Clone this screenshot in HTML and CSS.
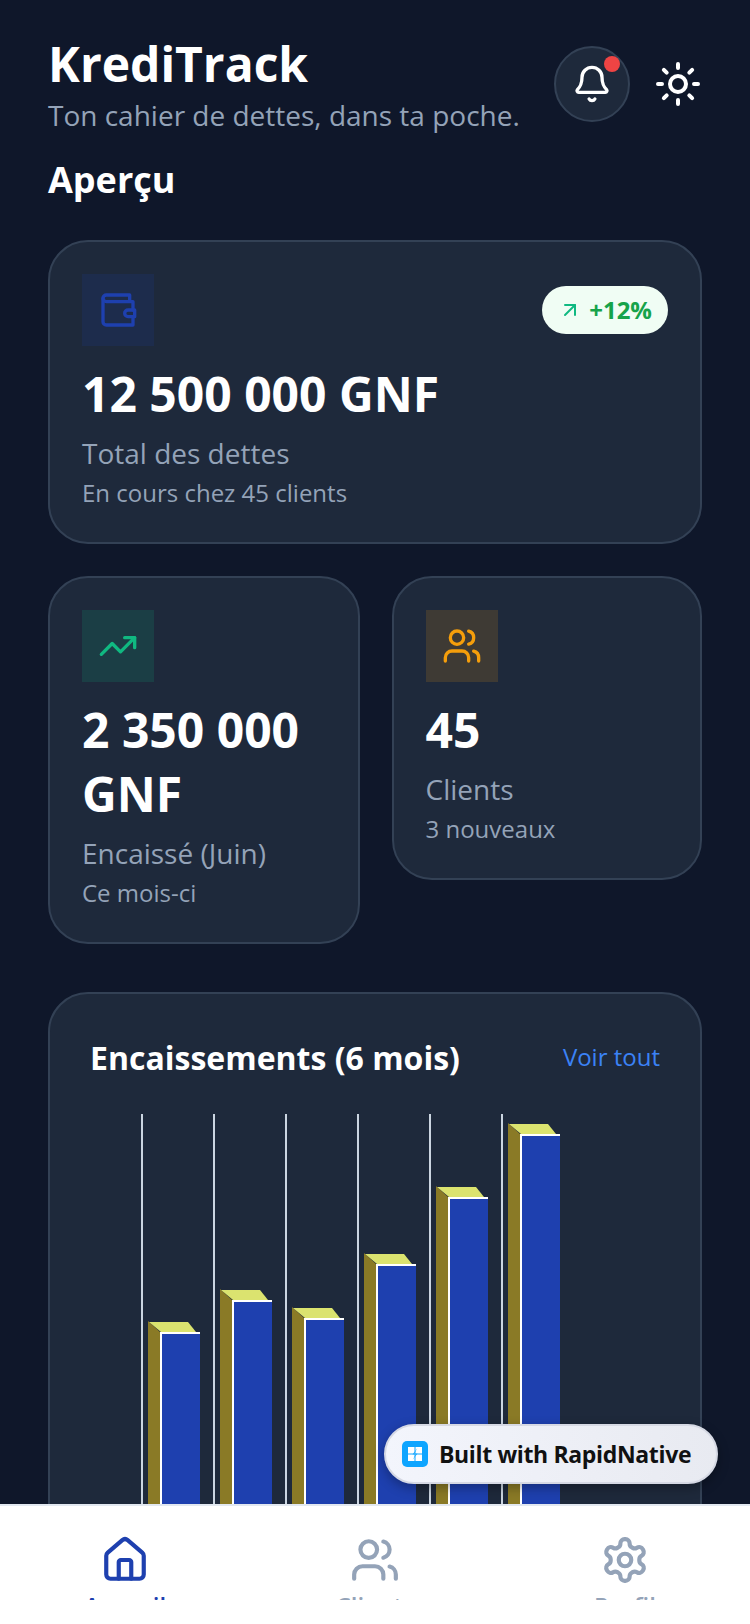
FILE: index.html
```html
<!DOCTYPE html>
<html lang="fr">
    <head>
        <meta charset="UTF-8" />
        <meta name="viewport" content="width=device-width, initial-scale=1.0" />
        <title>KrediTrack</title>
        <link rel="stylesheet" href="styles.css">
    </head>
    <body>
        <div class="app">
            <main class="scroll">
                <header class="header">
                    <div>
                        <h1 class="brand">KrediTrack</h1>
                        <p class="tagline">Ton cahier de dettes, dans ta poche.</p>
                    </div>
                    <div class="header-actions">
                        <button class="bell">
                            <svg class="icon" width="40" height="40" viewBox="0 0 24 24">
                                <path d="M10.268 21a2 2 0 0 0 3.464 0" />
                                <path d="M3.262 15.326A1 1 0 0 0 4 17h16a1 1 0 0 0 .74-1.673C19.41 13.956 18 12.499 18 8A6 6 0 0 0 6 8c0 4.499-1.411 5.956-2.738 7.326" />
                            </svg>
                            <span class="bell-dot"></span>
                        </button>
                        <svg class="icon" width="48" height="48" viewBox="0 0 24 24">
                            <circle cx="12" cy="12" r="4" />
                            <path d="M12 2v2M12 20v2M4.93 4.93l1.41 1.41M17.66 17.66l1.41 1.41M2 12h2M20 12h2M6.34 17.66l-1.41 1.41M19.07 4.93l-1.41 1.41" />
                        </svg>
                    </div>
                </header>

                <h2 class="section-title">Aperçu</h2>

                <section class="card">
                    <div class="card-top">
                        <div class="icon-box icon-box-blue">
                            <svg class="icon" width="40" height="40" viewBox="0 0 24 24">
                                <path d="M21 12V7H5a2 2 0 0 1 0-4h14v4" />
                                <path d="M3 5v14a2 2 0 0 0 2 2h16v-5" />
                                <path d="M18 12a2 2 0 0 0 0 4h4v-4Z" />
                            </svg>
                        </div>
                        <div class="trend">
                            <svg class="icon" width="24" height="24" viewBox="0 0 24 24">
                                <path d="M7 7h10v10" />
                                <path d="M7 17 17 7" />
                            </svg>
                            <span>+12%</span>
                        </div>
                    </div>
                    <div class="value">12 500 000 GNF</div>
                    <div class="label">Total des dettes</div>
                    <div class="sub">En cours chez 45 clients</div>
                </section>

                <div class="card-row">
                    <section class="card">
                        <div class="icon-box icon-box-green">
                            <svg class="icon" width="40" height="40" viewBox="0 0 24 24">
                                <path d="M22 7 13.5 15.5 8.5 10.5 2 17" />
                                <path d="M16 7h6v6" />
                            </svg>
                        </div>
                        <div class="value">2 350 000 GNF</div>
                        <div class="label">Encaissé (Juin)</div>
                        <div class="sub">Ce mois-ci</div>
                    </section>
                    <section class="card">
                        <div class="icon-box icon-box-amber">
                            <svg class="icon" width="40" height="40" viewBox="0 0 24 24">
                                <path d="M16 21v-2a4 4 0 0 0-4-4H6a4 4 0 0 0-4 4v2" />
                                <circle cx="9" cy="7" r="4" />
                                <path d="M22 21v-2a4 4 0 0 0-3-3.87" />
                                <path d="M16 3.13a4 4 0 0 1 0 7.75" />
                            </svg>
                        </div>
                        <div class="value">45</div>
                        <div class="label">Clients</div>
                        <div class="sub">3 nouveaux</div>
                    </section>
                </div>

                <section class="card chart-card">
                    <div class="chart-head">
                        <h3 class="chart-title">Encaissements (6 mois)</h3>
                        <span class="chart-link">Voir tout</span>
                    </div>
                    <!-- x = 52 in here is x = 142 on the page, y = 0 is y = 1114 -->
                    <svg class="chart" width="570" height="460" viewBox="0 0 570 460">
                        <defs>
                            <g id="bar">
                                <polygon class="bar-side" points="0,-11 12,0 12,460 0,460" />
                                <polygon class="bar-top" points="1,-10 40,-10 48,0 13,0" />
                                <rect class="bar-edge" x="12" y="0" width="40" height="460" />
                                <rect class="bar-face" x="14" y="2" width="38" height="460" />
                            </g>
                        </defs>
                        <path class="grid" d="M52 0V460M124 0V460M196 0V460M268 0V460M340 0V460M412 0V460" />
                        <use href="#bar" x="58" y="218" />
                        <use href="#bar" x="130" y="186" />
                        <use href="#bar" x="202" y="204" />
                        <use href="#bar" x="274" y="150" />
                        <use href="#bar" x="346" y="83" />
                        <use href="#bar" x="418" y="20" />
                    </svg>
                </section>
            </main>

            <div class="built">
                <svg width="26" height="26" viewBox="0 0 26 26">
                    <rect width="26" height="26" rx="5" fill="#0ea5ff" />
                    <rect x="6" y="6" width="6.5" height="6.5" fill="#fff" />
                    <rect x="13.5" y="6" width="6.5" height="6.5" fill="#fff" />
                    <rect x="6" y="13.5" width="6.5" height="6.5" fill="#fff" />
                    <rect x="13.5" y="13.5" width="6.5" height="6.5" fill="#fff" />
                    <polygon points="15.5,7 10.5,13.5 14,13 10.5,19 15.5,12.5 12,13" fill="#0ea5ff" />
                </svg>
                <span>Built with RapidNative</span>
            </div>

            <nav class="tabs">
                <div class="tab tab-active">
                    <svg class="icon" width="50" height="50" viewBox="0 0 24 24">
                        <path d="M15 21v-8a1 1 0 0 0-1-1h-4a1 1 0 0 0-1 1v8" />
                        <path d="M3 10a2 2 0 0 1 .709-1.528l7-5.999a2 2 0 0 1 2.582 0l7 5.999A2 2 0 0 1 21 10v9a2 2 0 0 1-2 2H5a2 2 0 0 1-2-2z" />
                    </svg>
                    <span>Accueil</span>
                </div>
                <div class="tab">
                    <svg class="icon" width="50" height="50" viewBox="0 0 24 24">
                        <path d="M16 21v-2a4 4 0 0 0-4-4H6a4 4 0 0 0-4 4v2" />
                        <circle cx="9" cy="7" r="4" />
                        <path d="M22 21v-2a4 4 0 0 0-3-3.87" />
                        <path d="M16 3.13a4 4 0 0 1 0 7.75" />
                    </svg>
                    <span>Clients</span>
                </div>
                <div class="tab">
                    <svg class="icon" width="50" height="50" viewBox="0 0 24 24">
                        <path d="M12.22 2h-.44a2 2 0 0 0-2 2v.18a2 2 0 0 1-1 1.73l-.43.25a2 2 0 0 1-2 0l-.15-.08a2 2 0 0 0-2.73.73l-.22.38a2 2 0 0 0 .73 2.73l.15.1a2 2 0 0 1 1 1.72v.51a2 2 0 0 1-1 1.74l-.15.09a2 2 0 0 0-.73 2.73l.22.38a2 2 0 0 0 2.73.73l.15-.08a2 2 0 0 1 2 0l.43.25a2 2 0 0 1 1 1.73V20a2 2 0 0 0 2 2h.44a2 2 0 0 0 2-2v-.18a2 2 0 0 1 1-1.73l.43-.25a2 2 0 0 1 2 0l.15.08a2 2 0 0 0 2.73-.73l.22-.39a2 2 0 0 0-.73-2.73l-.15-.08a2 2 0 0 1-1-1.74v-.5a2 2 0 0 1 1-1.74l.15-.09a2 2 0 0 0 .73-2.73l-.22-.38a2 2 0 0 0-2.73-.73l-.15.08a2 2 0 0 1-2 0l-.43-.25a2 2 0 0 1-1-1.73V4a2 2 0 0 0-2-2z" />
                        <circle cx="12" cy="12" r="3" />
                    </svg>
                    <span>Profil</span>
                </div>
            </nav>
        </div>
    </body>
</html>
```

FILE: styles.css
```css
body {
    margin: 0;
    background: #0f172a;
    font-family: "Open Sans", "Noto Sans", sans-serif;
}

.app {
    position: relative;
    width: 750px;
    height: 1624px;
    display: flex;
    flex-direction: column;
    overflow: hidden;
}

.scroll {
    flex: 1;
    min-height: 0;
    overflow: hidden;
    padding: 32px 48px 0;
}

.icon {
    display: block;
    flex: none;
    fill: none;
    stroke: currentColor;
    stroke-width: 2;
    stroke-linecap: round;
    stroke-linejoin: round;
}

/* header */
.header {
    display: flex;
    justify-content: space-between;
    align-items: center;
}
.brand {
    margin: 0;
    font-size: 48px;
    line-height: 64px;
    font-weight: 700;
    color: #fff;
}
.tagline {
    margin: -1px 0 1px;
    font-size: 28px;
    line-height: 40px;
    color: #94a3b8;
}
.header-actions {
    display: flex;
    align-items: center;
    gap: 24px;
    color: #fff;
}
.bell {
    position: relative;
    width: 76px;
    height: 76px;
    padding: 0;
    display: flex;
    align-items: center;
    justify-content: center;
    border: 2px solid #334155;
    border-radius: 50%;
    background: #1e293b;
    color: #fff;
}
.bell-dot {
    position: absolute;
    top: 8px;
    right: 8px;
    width: 16px;
    height: 16px;
    border-radius: 50%;
    background: #ef4444;
}

.section-title {
    margin: 16px 0 32px;
    font-size: 36px;
    line-height: 56px;
    font-weight: 700;
    color: #fff;
}

/* cards */
.card {
    padding: 32px 32px 33px;
    border: 2px solid #334155;
    border-radius: 40px;
    background: #1e293b;
}
.card-top {
    display: flex;
    justify-content: space-between;
    align-items: center;
}
.card-row {
    display: grid;
    grid-template-columns: 311.5px 310.5px;
    align-items: start;
    gap: 32px;
    margin-top: 32px;
}
.icon-box {
    width: 72px;
    height: 72px;
    display: flex;
    align-items: center;
    justify-content: center;
}
.icon-box-blue {
    background: rgba(30, 64, 175, 0.15);
    color: #1e40af;
}
.icon-box-green {
    background: rgba(16, 185, 129, 0.15);
    color: #10b981;
}
.icon-box-amber {
    background: rgba(245, 158, 11, 0.15);
    color: #f59e0b;
}
.trend {
    display: flex;
    align-items: center;
    gap: 7px;
    padding: 6px 16px;
    border-radius: 24px;
    background: #f0fdf4;
    color: #10b981;
}
.trend span {
    font-size: 24px;
    line-height: 36px;
    font-weight: 700;
    color: #16a34a;
}
.value {
    margin-top: 16px;
    font-size: 48px;
    line-height: 64px;
    font-weight: 700;
    color: #fff;
}
.label {
    margin-top: 7px;
    font-size: 28px;
    line-height: 40px;
    color: #94a3b8;
}
.sub {
    margin-top: 4px;
    font-size: 24px;
    line-height: 32px;
    color: #94a3b8;
}

/* chart */
.chart-card {
    margin-top: 48px;
    padding: 40px 40px 0;
}
.chart-head {
    display: flex;
    justify-content: space-between;
    align-items: center;
}
.chart-title {
    margin: 0;
    font-size: 32px;
    line-height: 48px;
    font-weight: 700;
    color: #fff;
}
.chart-link {
    margin-bottom: 2px;
    font-size: 24px;
    line-height: 40px;
    color: #3b82f6;
}
.chart {
    display: block;
    margin-top: 32px;
}
.grid {
    stroke: #cbd5e1;
    stroke-width: 2;
}
.bar-side {
    fill: #8a7a26;
}
.bar-top {
    fill: #dbe36f;
}
.bar-edge {
    fill: #fff;
}
.bar-face {
    fill: #1e40af;
}

/* badge over the page */
.built {
    position: absolute;
    top: 1424px;
    left: 384px;
    width: 334px;
    height: 60px;
    box-sizing: border-box;
    display: flex;
    align-items: center;
    gap: 11px;
    padding-left: 16px;
    border: 2px solid #d6d9e4;
    border-radius: 30px;
    background: linear-gradient(90deg, #f3f5fc, #e8eaf1);
    box-shadow: 0 4px 12px rgba(0, 0, 0, 0.3);
    font-size: 23px;
    font-weight: 700;
    letter-spacing: -0.35px;
    color: #111;
}

/* bottom tabs */
.tabs {
    flex: none;
    height: 120px;
    box-sizing: border-box;
    display: flex;
    padding-top: 29px;
    border-top: 2px solid #e2e8f0;
    background: #fff;
}
.tab {
    flex: 1;
    height: 65px;
    overflow: hidden;
    display: flex;
    flex-direction: column;
    align-items: center;
    gap: 5px;
    font-size: 24px;
    line-height: 32px;
    font-weight: 600;
    color: #94a3b8;
}
.tab-active {
    color: #1e40af;
}
```
